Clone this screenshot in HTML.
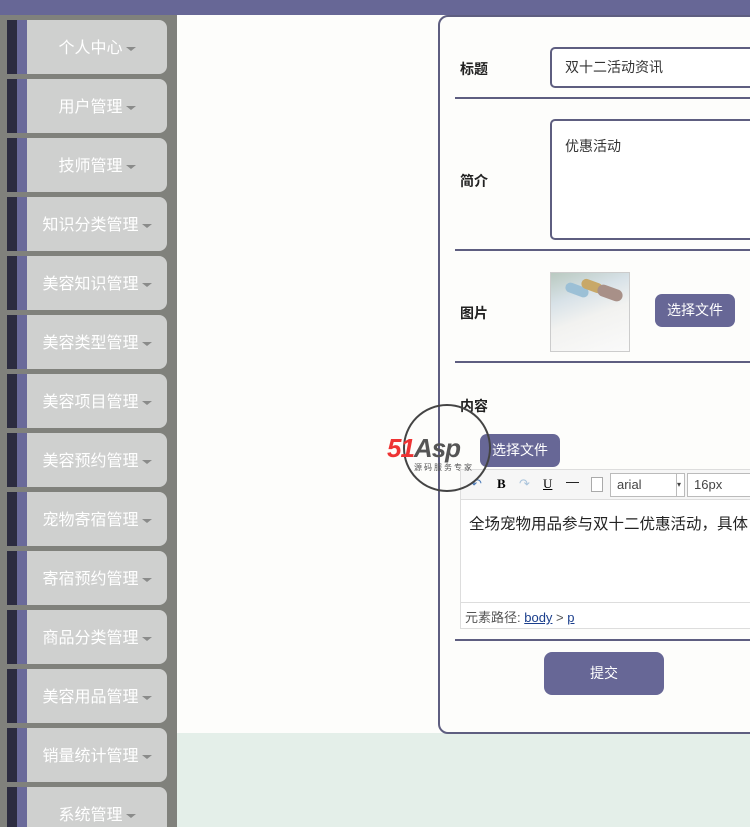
<!DOCTYPE html>
<html><head><meta charset="utf-8"><style>
*{box-sizing:border-box;margin:0;padding:0}
html,body{width:750px;height:827px;overflow:hidden}
body{position:relative;background:#fdfdfb;font-family:"Liberation Sans","Noto Sans CJK SC",sans-serif}
.top{position:absolute;left:0;top:0;width:750px;height:15px;background:#676796}
.side{position:absolute;left:0;top:15px;width:177px;height:812px;background:#80817c;overflow:hidden}
.item{position:absolute;left:7px;width:160px;height:54px}
.item .a{position:absolute;left:0;top:0;width:10px;height:100%;background:#2c2c40}
.item .b{position:absolute;left:10px;top:0;width:10px;height:100%;background:#6a6a9a}
.item .c{position:absolute;left:20px;top:0;width:140px;height:100%;background:#cfd0cf;border-radius:0 8px 8px 0;color:#fff;font-size:16px;line-height:58px;text-align:center}
.c:after{content:"";display:inline-block;margin-left:3px;vertical-align:middle;border-left:5px solid transparent;border-right:5px solid transparent;border-top:4px solid #8a8b8a}
.green{position:absolute;left:177px;top:733px;width:573px;height:94px;background:#e4efe9}
.card{position:absolute;left:438px;top:15px;width:330px;height:719px;border:2px solid #5e5e80;border-radius:10px;background:#fdfdfb}
.lbl{position:absolute;left:460px;font-size:14px;font-weight:bold;color:#222}
.hr{position:absolute;left:455px;width:295px;height:2px;background:#5e5e80}
.inp{position:absolute;left:550px;width:220px;border:2px solid #5e5e80;border-radius:5px;background:#fff;font-size:14px;color:#333;padding-left:13px}
.btn{position:absolute;background:#676796;color:#fff;font-size:14px;text-align:center;border-radius:7px}
</style></head><body>
<div class="top"></div>
<div class="side">
<div class="item" style="top:5px"><div class="a"></div><div class="b"></div><div class="c">个人中心</div></div>
<div class="item" style="top:64px"><div class="a"></div><div class="b"></div><div class="c">用户管理</div></div>
<div class="item" style="top:123px"><div class="a"></div><div class="b"></div><div class="c">技师管理</div></div>
<div class="item" style="top:182px"><div class="a"></div><div class="b"></div><div class="c">知识分类管理</div></div>
<div class="item" style="top:241px"><div class="a"></div><div class="b"></div><div class="c">美容知识管理</div></div>
<div class="item" style="top:300px"><div class="a"></div><div class="b"></div><div class="c">美容类型管理</div></div>
<div class="item" style="top:359px"><div class="a"></div><div class="b"></div><div class="c">美容项目管理</div></div>
<div class="item" style="top:418px"><div class="a"></div><div class="b"></div><div class="c">美容预约管理</div></div>
<div class="item" style="top:477px"><div class="a"></div><div class="b"></div><div class="c">宠物寄宿管理</div></div>
<div class="item" style="top:536px"><div class="a"></div><div class="b"></div><div class="c">寄宿预约管理</div></div>
<div class="item" style="top:595px"><div class="a"></div><div class="b"></div><div class="c">商品分类管理</div></div>
<div class="item" style="top:654px"><div class="a"></div><div class="b"></div><div class="c">美容用品管理</div></div>
<div class="item" style="top:713px"><div class="a"></div><div class="b"></div><div class="c">销量统计管理</div></div>
<div class="item" style="top:772px"><div class="a"></div><div class="b"></div><div class="c">系统管理</div></div>
</div>
<div class="green"></div>
<div class="card"></div>
<div class="lbl" style="top:59px">标题</div>
<div class="inp" style="top:47px;height:41px;line-height:37px">双十二活动资讯</div>
<div class="hr" style="top:97px"></div>
<div class="lbl" style="top:171px">简介</div>
<div class="inp" style="top:119px;height:121px;padding-top:15px">优惠活动</div>
<div class="hr" style="top:249px"></div>
<div class="lbl" style="top:303px">图片</div>
<div style="position:absolute;left:550px;top:272px;width:80px;height:80px;border:1px solid #ccc;background:linear-gradient(160deg,#b9c9c0 0%,#d8e2e8 30%,#f2f2f0 55%,#fafafa 100%)">
<div style="position:absolute;left:14px;top:12px;width:24px;height:10px;border-radius:5px;background:#9cc0d6;transform:rotate(20deg)"></div>
<div style="position:absolute;left:30px;top:8px;width:22px;height:10px;border-radius:5px;background:#c8a868;transform:rotate(20deg)"></div>
<div style="position:absolute;left:46px;top:14px;width:26px;height:12px;border-radius:6px;background:#a89088;transform:rotate(20deg)"></div>
</div>
<div class="btn" style="left:655px;top:294px;width:80px;height:33px;line-height:33px">选择文件</div>
<div class="hr" style="top:361px"></div>
<div class="lbl" style="top:396px">内容</div>
<div class="btn" style="left:480px;top:434px;width:80px;height:33px;line-height:33px">选择文件</div>
<div style="position:absolute;left:460px;top:469px;width:300px;height:160px;border:1px solid #ddd;background:#fff">
<div style="height:30px;background:#f6f6f6;border-bottom:1px solid #ddd;font-size:13px;position:relative">
<span style="position:absolute;left:10px;top:6px;color:#4a7ab8">↶</span>
<span style="position:absolute;left:36px;top:6px;font-family:'Liberation Serif',serif;font-weight:bold">B</span>
<span style="position:absolute;left:58px;top:6px;color:#aac4dc">↷</span>
<span style="position:absolute;left:82px;top:6px;font-family:'Liberation Serif',serif;text-decoration:underline">U</span>
<span style="position:absolute;left:105px;top:4px">—</span>
<span style="position:absolute;left:130px;top:7px;width:12px;height:15px;border:1px solid #aaa;background:#fff"></span>
<span style="position:absolute;left:149px;top:3px;width:75px;height:24px;border:1px solid #bbb;background:#fff;padding:3px 6px;color:#444">arial<span style="position:absolute;right:0;top:0;width:8px;height:22px;border-left:1px solid #bbb;font-size:8px;line-height:22px">▾</span></span>
<span style="position:absolute;left:226px;top:3px;width:80px;height:24px;border:1px solid #bbb;background:#fff;padding:3px 6px;color:#444">16px</span>
</div>
<div style="padding:12px 8px;font-size:15.5px;color:#222;white-space:nowrap">全场宠物用品参与双十二优惠活动，具体</div>
<div style="position:absolute;left:0;bottom:0;width:100%;height:26px;border-top:1px solid #ddd;font-size:13px;color:#555;padding:4px 4px">元素路径: <u style="color:#1a3e8c">body</u> &gt; <u style="color:#1a3e8c">p</u></div>
</div>
<div class="hr" style="top:639px"></div>
<div class="btn" style="left:544px;top:652px;width:120px;height:43px;line-height:43px;border-radius:8px">提交</div>
<div style="position:absolute;left:403px;top:404px;width:88px;height:88px;border:2px solid #444;border-radius:50%"></div>
<div style="position:absolute;left:387px;top:433px;font-size:26px;font-weight:bold;font-style:italic;color:#e33;letter-spacing:-1px">51<span style="color:#555">Asp</span></div>
<div style="position:absolute;left:414px;top:462px;font-size:8px;color:#555;letter-spacing:2px">源码服务专家</div>
</body></html>
